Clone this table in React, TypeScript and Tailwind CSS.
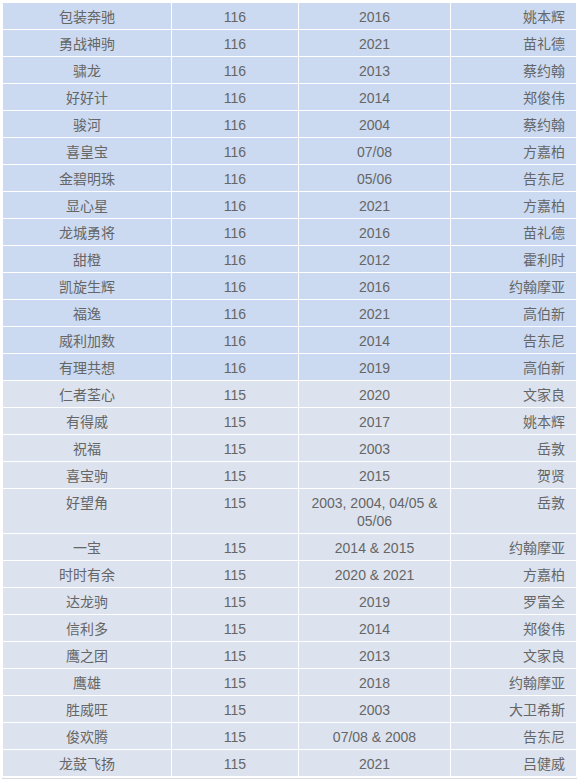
import React from 'react'

type Row = { name: string; rating: string; year: string; trainer: string }

const ROWS: Row[] = [
  { name: '包装奔驰', rating: '116', year: '2016', trainer: '姚本辉' },
  { name: '勇战神驹', rating: '116', year: '2021', trainer: '苗礼德' },
  { name: '骕龙', rating: '116', year: '2013', trainer: '蔡约翰' },
  { name: '好好计', rating: '116', year: '2014', trainer: '郑俊伟' },
  { name: '骏河', rating: '116', year: '2004', trainer: '蔡约翰' },
  { name: '喜皇宝', rating: '116', year: '07/08', trainer: '方嘉柏' },
  { name: '金碧明珠', rating: '116', year: '05/06', trainer: '告东尼' },
  { name: '显心星', rating: '116', year: '2021', trainer: '方嘉柏' },
  { name: '龙城勇将', rating: '116', year: '2016', trainer: '苗礼德' },
  { name: '甜橙', rating: '116', year: '2012', trainer: '霍利时' },
  { name: '凯旋生辉', rating: '116', year: '2016', trainer: '约翰摩亚' },
  { name: '福逸', rating: '116', year: '2021', trainer: '高伯新' },
  { name: '威利加数', rating: '116', year: '2014', trainer: '告东尼' },
  { name: '有理共想', rating: '116', year: '2019', trainer: '高伯新' },
  { name: '仁者荃心', rating: '115', year: '2020', trainer: '文家良' },
  { name: '有得威', rating: '115', year: '2017', trainer: '姚本辉' },
  { name: '祝福', rating: '115', year: '2003', trainer: '岳敦' },
  { name: '喜宝驹', rating: '115', year: '2015', trainer: '贺贤' },
  { name: '好望角', rating: '115', year: '2003, 2004, 04/05 & 05/06', trainer: '岳敦' },
  { name: '一宝', rating: '115', year: '2014 & 2015', trainer: '约翰摩亚' },
  { name: '时时有余', rating: '115', year: '2020 & 2021', trainer: '方嘉柏' },
  { name: '达龙驹', rating: '115', year: '2019', trainer: '罗富全' },
  { name: '信利多', rating: '115', year: '2014', trainer: '郑俊伟' },
  { name: '鹰之团', rating: '115', year: '2013', trainer: '文家良' },
  { name: '鹰雄', rating: '115', year: '2018', trainer: '约翰摩亚' },
  { name: '胜威旺', rating: '115', year: '2003', trainer: '大卫希斯' },
  { name: '俊欢腾', rating: '115', year: '07/08 & 2008', trainer: '告东尼' },
  { name: '龙鼓飞扬', rating: '115', year: '2021', trainer: '吕健威' },
]

export default function App() {
  return (
    <div
      className="w-[579px] h-[783px] bg-white overflow-hidden"
      style={{ fontFamily: '"Liberation Sans", "Noto Sans CJK SC", sans-serif' }}
    >
      <div className="pl-[2px] pt-[2px] w-[577px]">
        <table className="table-fixed border-separate border-spacing-[1px] w-[575px] text-[14px] leading-[18px] text-[#666666]">
          <colgroup>
            <col className="w-[168px]" />
            <col className="w-[126px]" />
            <col className="w-[151px]" />
            <col className="w-[125px]" />
          </colgroup>
          <tbody>
            {ROWS.map((r) => {
              const bg = r.rating === '116' ? 'bg-[#cbdaf1]' : 'bg-[#dce3ef]'
              return (
                <tr key={r.name} className={bg}>
                  <td className="pt-[5px] pb-[3px] align-top text-center">{r.name}</td>
                  <td className="pt-[5px] pb-[3px] align-top text-center">{r.rating}</td>
                  <td className="pt-[5px] pb-[3px] px-[12px] align-top text-center">{r.year}</td>
                  <td className="pt-[5px] pb-[3px] pr-[11px] align-top text-right">{r.trainer}</td>
                </tr>
              )
            })}
          </tbody>
        </table>
        <div className="mt-[1px] h-[1px] bg-[#d6d9de] w-[575px]" />
      </div>
    </div>
  )
}
